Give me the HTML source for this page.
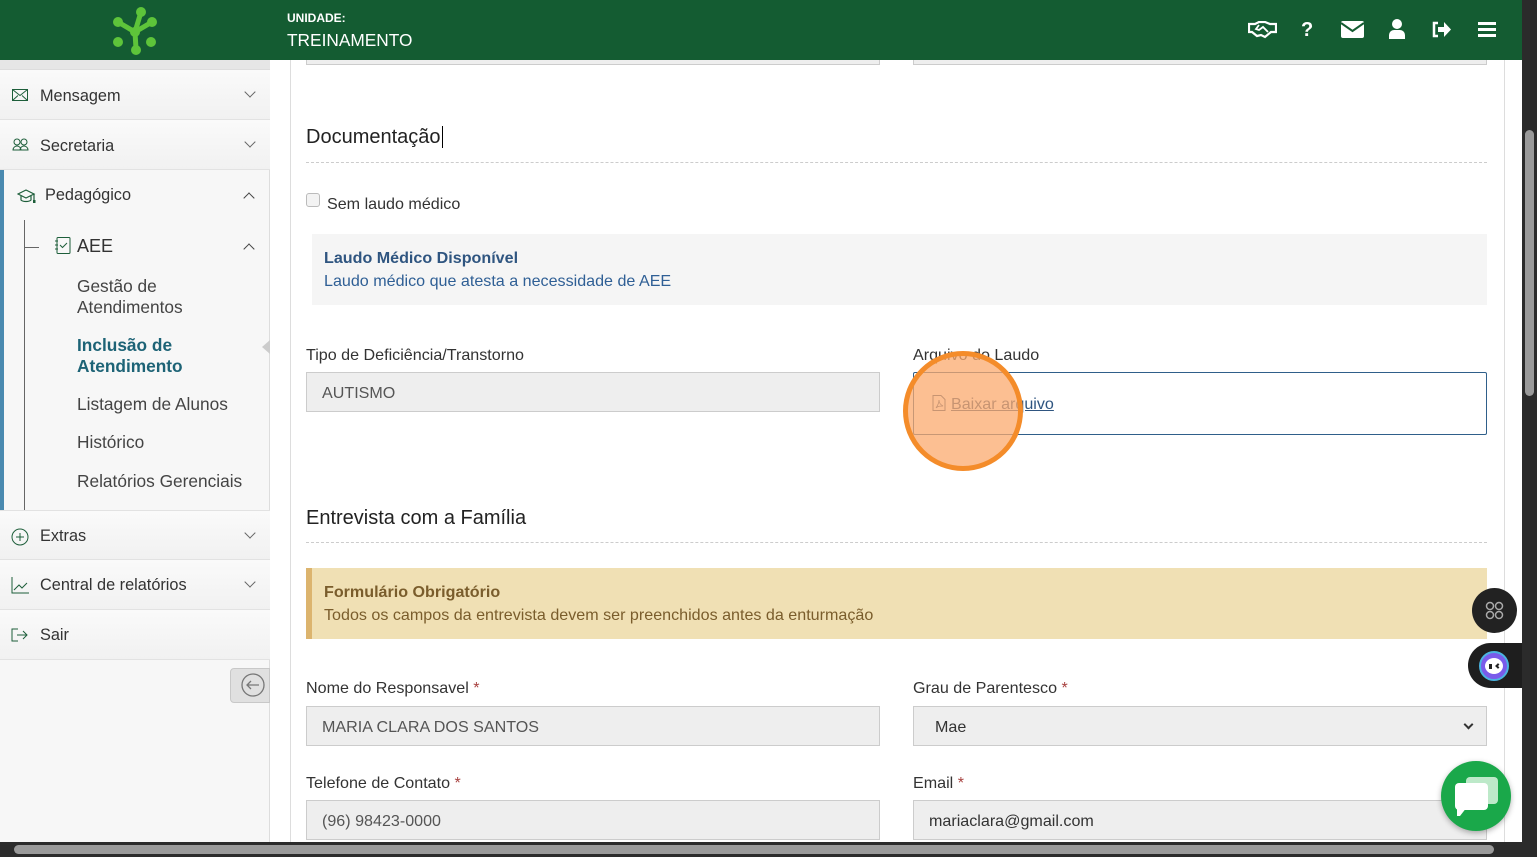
<!DOCTYPE html>
<html><head><meta charset="utf-8"><style>
*{box-sizing:border-box;margin:0;padding:0}
body{width:1537px;height:857px;overflow:hidden;background:#fff;font-family:"Liberation Sans",sans-serif;color:#333;position:relative}
.abs{position:absolute}
.hdr{left:0;top:0;width:1522px;height:60px;background:#145c32}
.side{left:0;top:60px;width:270px;height:782px;background:#f7f7f7;border-right:1px solid #ddd}
.mi{position:absolute;left:0;width:270px;height:50px;border-bottom:1px solid #e2e2e2;font-size:16.3px;color:#333;background:linear-gradient(#fafafa,#f1f1f1)}
.mi span{position:absolute;left:40px;top:16px}
.chev{position:absolute;right:16px;top:18px;width:8px;height:8px;border-right:1px solid #666;border-bottom:1px solid #666;transform:rotate(45deg)}
.chevu{position:absolute;right:16px;top:24px;width:8px;height:8px;border-left:1.5px solid #444;border-top:1.5px solid #444;transform:rotate(45deg)}
.sub{position:absolute;left:77px;font-size:17.3px;color:#444;line-height:21px}
.card{left:290px;top:60px;width:1215px;height:782px;border-left:1px solid #ddd;border-right:1px solid #ddd;background:#fff}
.h{font-size:20px;color:#222}
.hr{border-top:1px dashed #ccc;height:0}
.lbl{font-size:16.1px;color:#333}
.inp{height:40px;background:#eee;border:1px solid #ccc;font-size:16.1px;color:#555;padding:11px 15px}
.star{color:#a94442}
</style></head><body>
<div class="abs hdr"></div>
<svg class="abs" style="left:110px;top:5px" width="50" height="50" viewBox="0 0 50 50"><g stroke="#5ec43a" stroke-width="5" stroke-linecap="round"><line x1="8" y1="17" x2="25" y2="27"/><line x1="25" y1="27" x2="31" y2="7"/><line x1="25" y1="27" x2="26" y2="44"/><line x1="25" y1="27" x2="42" y2="17"/></g><g fill="#5ec43a"><circle cx="31" cy="7" r="5"/><circle cx="8" cy="17" r="5"/><circle cx="42" cy="17" r="5"/><circle cx="25" cy="27" r="5"/><circle cx="8" cy="37" r="5"/><circle cx="41" cy="37" r="5"/><circle cx="26" cy="45" r="5"/></g></svg>
<div class="abs" style="left:287px;top:11px;color:#fff;font-size:12px;font-weight:bold">UNIDADE:</div>
<div class="abs" style="left:287px;top:30px;color:#fff;font-size:17.3px">TREINAMENTO</div>
<div class="abs" style="left:1248px;top:20px;color:#fff;font-size:18px">
<svg class="abs" style="left:0;top:1px" width="29" height="18" viewBox="0 0 29 18"><path d="M1 3h6l4-2h6l5 2h6v8h-5l-6 5-4-2-4 1-5-4H1z" fill="none" stroke="#fff" stroke-width="2.2"/><path d="M11 4l-3 4 3 1 4-3 5 5" fill="none" stroke="#fff" stroke-width="1.8"/></svg>
<b class="abs" style="left:53px;top:-1px;font-size:20px">?</b>
<svg class="abs" style="left:93px;top:1px" width="23" height="17"><rect width="23" height="17" rx="2" fill="#fff"/><path d="M0 2l11.5 8L23 2" stroke="#145c32" stroke-width="2" fill="none"/></svg>
<svg class="abs" style="left:141px;top:-1px" width="16" height="20"><circle cx="8" cy="5" r="5" fill="#fff"/><path d="M0 20v-4a5 5 0 0 1 5-5h6a5 5 0 0 1 5 5v4z" fill="#fff"/></svg>
<svg class="abs" style="left:183px;top:1px" width="20" height="17"><path d="M7 2H3v13h4" stroke="#fff" stroke-width="2.5" fill="none"/><path d="M7 6h6V1l7 7.5-7 7.5v-5H7z" fill="#fff"/></svg>
<svg class="abs" style="left:230px;top:2px" width="18" height="15"><rect y="0" width="18" height="3" fill="#fff"/><rect y="6" width="18" height="3" fill="#fff"/><rect y="12" width="18" height="3" fill="#fff"/></svg>
</div>
<div class="abs" style="left:1522px;top:0;width:15px;height:857px;background:#2b2b2b"></div>
<div class="abs" style="left:1525px;top:130px;width:9px;height:266px;background:#9a9a9a;border-radius:5px"></div>
<div class="abs" style="left:0;top:842px;width:1537px;height:15px;background:#2b2b2b"></div>
<div class="abs" style="left:14px;top:845px;width:1480px;height:9px;background:#9a9a9a;border-radius:5px"></div>

<div class="abs side">
<div class="abs" style="left:0;top:0;width:270px;height:10px;background:#e6e6e6;border-bottom:1px solid #ddd"></div>
<div class="mi" style="top:10px"><svg class="abs" style="left:12px;top:19px" width="16" height="12"><rect x=".5" y=".5" width="15" height="11" fill="none" stroke="#1d5e3a"/><path d="M.5 .5l7.5 6 7.5-6M.5 11.5l5.5-5M15.5 11.5l-5.5-5" stroke="#1d5e3a" fill="none"/></svg><span style="top:17px">Mensagem</span><b class="chev"></b></div>
<div class="mi" style="top:60px"><svg class="abs" style="left:12px;top:18px" width="18" height="13"><circle cx="5" cy="4" r="3" fill="none" stroke="#1d5e3a"/><circle cx="12" cy="4" r="3" fill="none" stroke="#1d5e3a"/><path d="M1 12a4 4 0 0 1 8 0zM8 12a4 4 0 0 1 8 0z" fill="none" stroke="#1d5e3a"/></svg><span style="top:17px">Secretaria</span><b class="chev"></b></div>
<div class="abs" style="left:0;top:110px;width:4px;height:340px;background:#4a8ab0"></div>
<svg class="abs" style="left:17px;top:129px" width="19" height="15"><path d="M1 5l8-4 8 4-8 4z" fill="none" stroke="#1d5e3a" stroke-width="1.2"/><path d="M4 7v4c2 2 8 2 10 0V7" fill="none" stroke="#1d5e3a" stroke-width="1.2"/><path d="M17 5v7" stroke="#1d5e3a" stroke-width="1.2"/><rect x="16" y="11" width="2.5" height="3" fill="#1d5e3a"/></svg>
<div class="abs" style="left:45px;top:126px;font-size:16.3px">Pedagógico</div>
<b class="chevu" style="top:134px"></b>
<div class="abs" style="left:24px;top:160px;width:1px;height:290px;background:#666"></div>
<div class="abs" style="left:24px;top:187px;width:15px;height:1px;background:#666"></div>
<svg class="abs" style="left:54px;top:177px" width="17" height="17"><rect x="3" y=".5" width="13" height="16" rx="1" fill="none" stroke="#1d5e3a"/><path d="M1 4h3M1 8h3M1 12h3" stroke="#1d5e3a"/><path d="M6 8l2.5 2.5L13 6" stroke="#1d5e3a" fill="none"/></svg>
<div class="abs" style="left:77px;top:176px;font-size:18px">AEE</div>
<b class="chevu" style="top:185px"></b>
<div class="sub" style="top:216px">Gestão de<br>Atendimentos</div>
<div class="sub" style="top:275px;color:#1d6376;font-weight:bold">Inclusão de<br>Atendimento</div>
<div class="abs" style="left:262px;top:280px;width:0;height:0;border-top:7px solid transparent;border-bottom:7px solid transparent;border-right:8px solid #ccc"></div>
<div class="sub" style="top:334px">Listagem de Alunos</div>
<div class="sub" style="top:372px">Histórico</div>
<div class="sub" style="top:411px">Relatórios Gerenciais</div>
<div class="mi" style="top:450px;border-top:1px solid #e2e2e2"><svg class="abs" style="left:11px;top:17px" width="18" height="18"><circle cx="9" cy="9" r="8" fill="none" stroke="#1d5e3a"/><path d="M9 5v8M5 9h8" stroke="#1d5e3a"/></svg><span style="top:16px">Extras</span><b class="chev"></b></div>
<div class="mi" style="top:500px"><svg class="abs" style="left:11px;top:17px" width="18" height="17"><path d="M1 0v16h17M3 13l5-5 3 3 5-5" stroke="#1d5e3a" fill="none"/></svg><span style="top:16px">Central de relatórios</span><b class="chev"></b></div>
<div class="mi" style="top:550px"><svg class="abs" style="left:11px;top:18px" width="18" height="14"><path d="M7 1H1v12h6M6 7h10M12 3l4 4-4 4" stroke="#1d5e3a" fill="none"/></svg><span style="top:16px">Sair</span></div>
<div class="abs" style="left:230px;top:608px;width:40px;height:35px;background:#e0e0e0;border:1px solid #c8c8c8;border-radius:4px 0 0 4px"><svg class="abs" style="left:10px;top:4px" width="24" height="24"><circle cx="12" cy="12" r="11" fill="none" stroke="#777" stroke-width="1.3"/><path d="M18 12H6M10 8l-4 4 4 4" stroke="#777" stroke-width="1.3" fill="none"/></svg></div>
</div>

<div class="abs card"></div>
<div class="abs" style="left:306px;top:60px;width:574px;height:5px;border:1px solid #ccc;border-top:none;background:#eee"></div>
<div class="abs" style="left:913px;top:60px;width:574px;height:5px;border:1px solid #ccc;border-top:none;background:#eee"></div>
<div class="abs h" style="left:306px;top:126px">Documentação<span style="border-left:1px solid #000;margin-left:1px"></span></div>
<div class="abs hr" style="left:306px;top:162px;width:1181px"></div>
<div class="abs" style="left:306px;top:193px;width:14px;height:14px;border:1px solid #bbb;border-radius:3px;background:#f3f3f3"></div>
<div class="abs" style="left:327px;top:195px;font-size:16.1px">Sem laudo médico</div>
<div class="abs" style="left:312px;top:234px;width:1175px;height:71px;background:#f5f5f5"></div>
<div class="abs" style="left:324px;top:249px;font-size:16.1px;font-weight:bold;color:#2f5580">Laudo Médico Disponível</div>
<div class="abs" style="left:324px;top:272px;font-size:16.1px;color:#2f5f95">Laudo médico que atesta a necessidade de AEE</div>
<div class="abs lbl" style="left:306px;top:346px">Tipo de Deficiência/Transtorno</div>
<div class="abs inp" style="left:306px;top:372px;width:574px">AUTISMO</div>
<div class="abs lbl" style="left:913px;top:346px">Arquivo do Laudo</div>
<div class="abs" style="left:913px;top:372px;width:574px;height:63px;border:1px solid #2f5f8a;border-radius:2px"></div>
<svg class="abs" style="left:932px;top:395px" width="14" height="16"><path d="M1 .5h8l4 4v11H1z" fill="none" stroke="#2f5580"/><path d="M4 13c2-3 3-6 3-8 0 3 2 5 4 6-3 0-5 0-7 2z" fill="none" stroke="#2f5580" stroke-width=".8"/></svg>
<div class="abs" style="left:951px;top:395px;font-size:16.1px;color:#2f5580;text-decoration:underline">Baixar arquivo</div>
<div class="abs" style="left:903px;top:351px;width:120px;height:120px;border-radius:50%;background:rgba(251,170,110,.75);border:5px solid #f48c2a"></div>
<div class="abs h" style="left:306px;top:507px">Entrevista com a Família</div>
<div class="abs hr" style="left:306px;top:542px;width:1181px"></div>
<div class="abs" style="left:306px;top:568px;width:1181px;height:71px;background:#f0e0b4;border-left:6px solid #dcb46e"></div>
<div class="abs" style="left:324px;top:583px;font-size:16.1px;font-weight:bold;color:#7a5d2c">Formulário Obrigatório</div>
<div class="abs" style="left:324px;top:606px;font-size:16.1px;color:#7a5d2c">Todos os campos da entrevista devem ser preenchidos antes da enturmação</div>
<div class="abs lbl" style="left:306px;top:679px">Nome do Responsavel <span class="star">*</span></div>
<div class="abs inp" style="left:306px;top:706px;width:574px">MARIA CLARA DOS SANTOS</div>
<div class="abs lbl" style="left:913px;top:679px">Grau de Parentesco <span class="star">*</span></div>
<div class="abs inp" style="left:913px;top:706px;width:574px;color:#333;padding-left:21px">Mae<span style="position:absolute;right:14px;top:14px;width:7px;height:7px;border-right:2px solid #333;border-bottom:2px solid #333;transform:rotate(45deg)"></span></div>
<div class="abs lbl" style="left:306px;top:774px">Telefone de Contato <span class="star">*</span></div>
<div class="abs inp" style="left:306px;top:800px;width:574px;height:40px">(96) 98423-0000</div>
<div class="abs lbl" style="left:913px;top:774px">Email <span class="star">*</span></div>
<div class="abs inp" style="left:913px;top:800px;width:574px;height:40px;color:#333">mariaclara@gmail.com</div>

<div class="abs" style="left:1472px;top:588px;width:45px;height:45px;border-radius:50%;background:#222"><svg class="abs" style="left:13px;top:13px" width="19" height="19"><g fill="none" stroke="#aaa" stroke-width="1.5"><circle cx="5" cy="5" r="3.5"/><circle cx="14" cy="5" r="3.5"/><circle cx="5" cy="14" r="3.5"/><circle cx="14" cy="14" r="3.5"/></g></svg></div>
<div class="abs" style="left:1468px;top:643px;width:54px;height:45px;border-radius:23px 0 0 23px;background:#1e1e1e"><div class="abs" style="left:11px;top:8px;width:30px;height:30px;border-radius:50%;background:#7a5bea;border:2px solid #4bb3e0"><div class="abs" style="left:4px;top:5px;width:18px;height:16px;border-radius:50%;background:#fff"></div><div class="abs" style="left:8px;top:11px;width:3px;height:5px;background:#222"></div><div class="abs" style="left:15px;top:11px;width:4px;height:4px;border-left:2px solid #222;border-bottom:2px solid #222;transform:rotate(45deg)"></div></div></div>
<div class="abs" style="left:1441px;top:761px;width:70px;height:70px;border-radius:50%;background:#1aa84a;box-shadow:0 2px 6px rgba(0,0,0,.3)"><div class="abs" style="left:25px;top:16px;width:32px;height:27px;border-radius:4px;background:#bde9c9"></div><div class="abs" style="left:14px;top:22px;width:33px;height:27px;border-radius:4px;background:#fff"></div><div class="abs" style="left:16px;top:46px;width:0;height:0;border-left:3px solid #fff;border-right:7px solid transparent;border-top:9px solid #fff"></div></div>
</body></html>
